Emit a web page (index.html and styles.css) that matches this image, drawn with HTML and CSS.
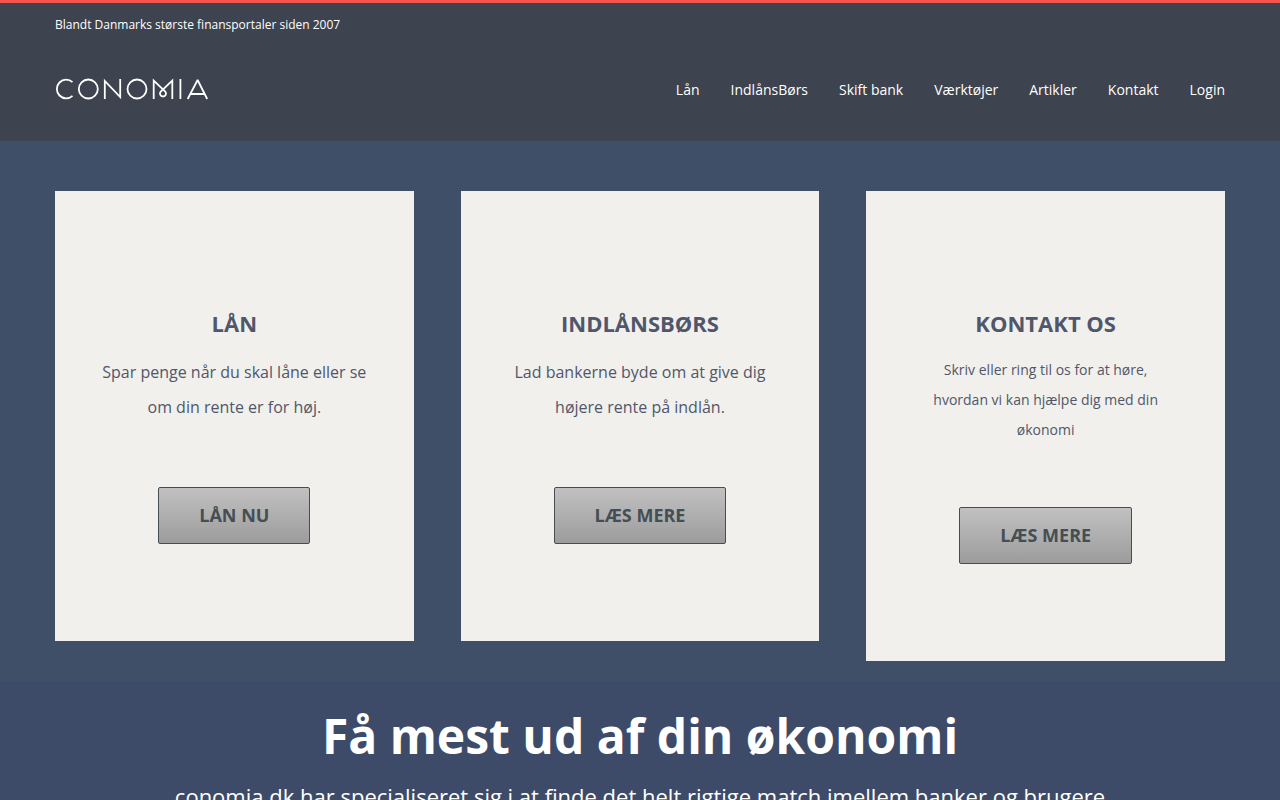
FILE: index.html
```html
<!DOCTYPE html>
<html lang="da">
<head>
<meta charset="utf-8">
<meta name="viewport" content="width=device-width, initial-scale=1">
<title>Conomia</title>
<link rel="stylesheet" href="styles.css">
</head>
<body>
<header class="site-header">
  <div class="container">
    <p class="tagline">Blandt Danmarks største finansportaler siden 2007</p>
    <div class="header-row">
      <a class="logo" href="#" aria-label="Conomia">
        <svg width="154" height="22" viewBox="0 0 154 22" fill="none" stroke="#fff" stroke-width="1.8" aria-hidden="true">
          <path d="M17.5 4.2A9.3 9.3 0 1 0 17.5 17.8"/>
          <circle cx="33.300" cy="11" r="9.500"/>
          <path d="M49.800 21V3L65.200 19V1"/>
          <circle cx="82" cy="11" r="9.500"/>
          <path d="M98.700 21V2.500L110.300 13.600C111.800 15.300 110.900 18.500 108 18.500S104.200 15.300 105.700 13.600L117.300 2.500V21"/>
          <path d="M125.400 1V21"/>
          <path d="M132.700 21L142.600 2L152.200 21M136 16H149.500" stroke-linejoin="bevel"/>
        </svg>
      </a>
      <nav class="main-nav">
        <a href="#">Lån</a>
        <a href="#">IndlånsBørs</a>
        <a href="#">Skift bank</a>
        <a href="#">Værktøjer</a>
        <a href="#">Artikler</a>
        <a href="#">Kontakt</a>
        <a href="#">Login</a>
      </nav>
    </div>
  </div>
</header>
<main>
  <section class="offers">
    <div class="container cards">
      <article class="card">
        <h2 class="card-title">LÅN</h2>
        <p class="card-text">Spar penge når du skal låne eller se om din rente er for høj.</p>
        <a class="button" href="#">LÅN NU</a>
      </article>
      <article class="card">
        <h2 class="card-title">INDLÅNSBØRS</h2>
        <p class="card-text">Lad bankerne byde om at give dig højere rente på indlån.</p>
        <a class="button" href="#">LÆS MERE</a>
      </article>
      <article class="card">
        <h2 class="card-title">KONTAKT OS</h2>
        <p class="card-text card-text-small">Skriv eller ring til os for at høre, hvordan vi kan hjælpe dig med din økonomi</p>
        <a class="button" href="#">LÆS MERE</a>
      </article>
    </div>
  </section>
  <section class="intro">
    <div class="container">
      <h1 class="intro-title">Få mest ud af din økonomi</h1>
      <p class="intro-text">conomia.dk har specialiseret sig i at finde det helt rigtige match imellem banker og brugere</p>
    </div>
  </section>
</main>
</body>
</html>
```

FILE: styles.css
```css
* {
  box-sizing: border-box;
}

body {
  margin: 0;
  background: #3d4b68;
  color: #fff;
  font-family: "Open Sans", sans-serif;
}

h1, h2, p {
  margin: 0;
}

a {
  color: inherit;
  text-decoration: none;
}

.container {
  max-width: 1170px;
  margin: 0 auto;
}

.site-header {
  border-top: 3px solid #f4544c;
  background: #3d434f;
  padding: 12px 20px 39px;
}

.tagline {
  font-size: 12px;
  line-height: 20px;
}

.header-row {
  display: flex;
  justify-content: space-between;
  align-items: flex-start;
  padding-top: 43px;
}

.logo svg {
  display: block;
}

.main-nav {
  display: flex;
  flex-wrap: wrap;
  gap: 0 31px;
  font-size: 14px;
  line-height: 24px;
}

.offers {
  background: #3f4f68;
  padding: 50px 20px 20px;
}

.cards {
  display: grid;
  grid-template-columns: repeat(auto-fit, minmax(300px, 1fr));
  gap: 47px;
  align-items: start;
}

.card {
  background: #f1f0ec;
  color: #50576b;
  padding: 115px 45px 97px;
  text-align: center;
}

.card-title {
  font-size: 22px;
  line-height: 34px;
  margin-bottom: 15px;
}

.card-text {
  font-size: 16px;
  line-height: 35px;
  margin-bottom: 62px;
}

.card-text-small {
  font-size: 14px;
  line-height: 30px;
  padding: 0 5px;
}

.button {
  display: inline-block;
  vertical-align: top;
  border: 1px solid #444e54;
  border-radius: 2px;
  background: linear-gradient(#c1c1c1, #9c9c9c);
  color: #444e54;
  padding: 0 40px;
  font-size: 18px;
  font-weight: 700;
  line-height: 55px;
}

.intro {
  background: #3d4b68;
  padding: 20px 20px 0;
  text-align: center;
}

.intro-title {
  font-size: 48px;
  line-height: 70px;
}

.intro-text {
  font-size: 22px;
  line-height: 30px;
  padding-top: 10px;
}
```
